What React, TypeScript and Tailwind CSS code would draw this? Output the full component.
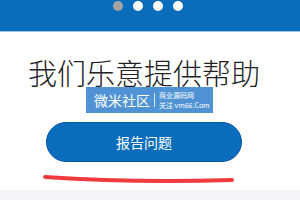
export default function App() {
  return (
    <div className="relative w-[300px] h-[200px] overflow-hidden bg-white font-['Noto_Sans_CJK_SC',sans-serif]">
      {/* Header with carousel dots */}
      <div className="h-[31px] bg-[#0a6dbc] flex justify-center pr-[4px] pt-[1px] gap-[10px]">
        <span className="w-[10px] h-[10px] rounded-full bg-[#a3a3a3]" />
        <span className="w-[10px] h-[10px] rounded-full bg-white" />
        <span className="w-[10px] h-[10px] rounded-full bg-white" />
        <span className="w-[10px] h-[10px] rounded-full bg-white" />
      </div>
      <div className="h-[1px] bg-[#9cc7ec]" />

      {/* Content */}
      <div className="flex flex-col items-center pr-[12px]">
        <h1 className="mt-[26px] text-[29px] leading-[28px] font-extralight text-[#222] whitespace-nowrap">
          我们乐意提供帮助
        </h1>
        <button className="mt-[36px] w-[196px] h-[40px] rounded-full bg-[#0a6dbc] border border-[#0b55a3] text-white text-[14px]">
          报告问题
        </button>
        <svg width="196" height="10" viewBox="0 0 196 10" className="mt-[12px] ml-[-8px]">
          <path d="M3 3 Q 90 9 190 6" stroke="#f23b3e" strokeWidth="4" fill="none" strokeLinecap="round" />
        </svg>
      </div>

      {/* Bottom band */}
      <div className="absolute left-0 right-0 bottom-0 h-[10px] bg-[#f3f4f7]" />

      {/* Watermark */}
      <div className="absolute left-[86px] top-[87px] w-[127px] h-[26px] bg-[#3d87cf]/90 flex items-center pl-[8px] text-white whitespace-nowrap">
        <span className="shrink-0 text-[14px] leading-none">微米社区</span>
        <span className="shrink-0 mx-[4px] w-[1px] h-[14px] bg-white/80" />
        <span className="shrink-0 flex flex-col text-[7px] leading-[10px]">
          <span>商业源码网</span>
          <span>关注 vm66.Com</span>
        </span>
      </div>
    </div>
  );
}
